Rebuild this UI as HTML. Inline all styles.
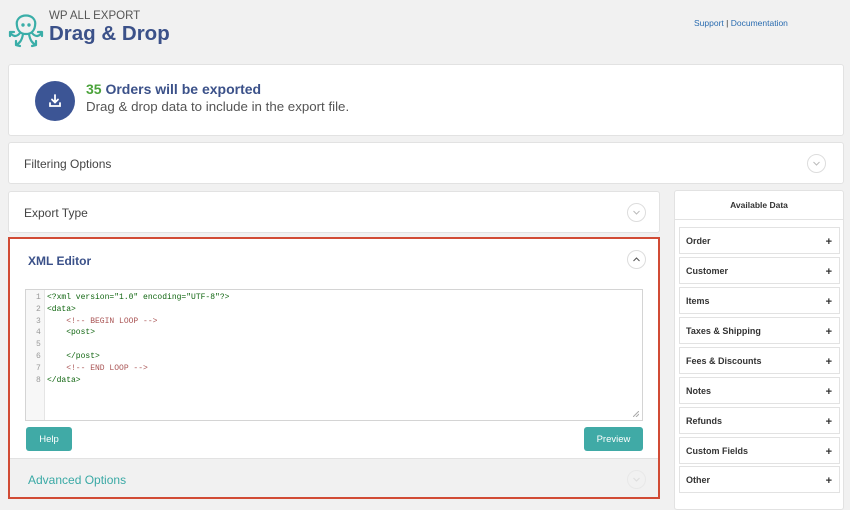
<!DOCTYPE html>
<html><head><style>
*{box-sizing:border-box;margin:0;padding:0}
body{width:850px;height:506px;background:#f1f1f1;font-family:"Liberation Sans",sans-serif;position:relative;overflow:hidden}
.a{position:absolute}
.box{position:absolute;background:#fff;border:1px solid #e2e2e2;border-radius:3px}
.circ{position:absolute;width:19px;height:19px;border:1px solid #ddd;border-radius:50%;background:#fff}
.circ svg{position:absolute;left:4px;top:4px}
.item{position:absolute;left:679px;width:161px;height:27px;background:#fff;border:1px solid #e2e2e2;font-size:9px;font-weight:bold;color:#333;padding:8px 0 0 6px}
.item span{position:absolute;right:7px;top:8px;font-size:11px}
.code{font-family:"Liberation Mono",monospace;font-size:8px;line-height:11.8px;color:#333;white-space:pre}
.btn{position:absolute;background:#40aaa6;color:#fff;font-size:9.5px;border-radius:3px;text-align:center;line-height:24px;height:24px;padding-top:1px}
</style></head><body>
<svg class="a" style="left:8px;top:8px" width="36" height="40" viewBox="0 0 36 40" fill="none" stroke="#3aaea8" stroke-width="2.2" stroke-linecap="round">
<path d="M9 18 C6 4 30 4 27 18 C26 24 22 26 18 26 C14 26 10 24 9 18Z"/>
<path d="M12 25 C8 30 4 28 2 24 M2 24 l0 4 M2 24 l4 0"/>
<path d="M24 25 C28 30 32 28 34 24 M34 24 l0 4 M34 24 l-4 0"/>
<path d="M15 26 C14 32 12 35 8 37 M8 37 l4 1 M8 37 l0-4"/>
<path d="M21 26 C22 32 24 35 28 37 M28 37 l-4 1 M28 37 l0-4"/>
<circle cx="15" cy="17" r="0.6" fill="#3aaea8"/><circle cx="21" cy="17" r="0.6" fill="#3aaea8"/>
</svg>
<div class="a" style="left:49px;top:10px;font-size:11.5px;color:#555">WP ALL EXPORT</div>
<div class="a" style="left:49px;top:22px;font-size:20.5px;font-weight:bold;color:#3b5189">Drag &amp; Drop</div>
<div class="a" style="left:694px;top:18px;font-size:8.5px;color:#2a6cb0">Support <span style="color:#333">|</span> Documentation</div>

<div class="box" style="left:8px;top:64px;width:836px;height:72px"></div>
<div class="a" style="left:35px;top:81px;width:40px;height:40px;border-radius:50%;background:#3c5595"></div>
<svg class="a" style="left:47px;top:93px" width="16" height="16" viewBox="0 0 16 16" fill="none" stroke="#fff" stroke-width="1.8" stroke-linecap="round"><path d="M8 2v7M5 6.5l3 3 3-3M3 10v3h10v-3"/></svg>
<div class="a" style="left:86px;top:81px;font-size:14px;font-weight:bold;color:#3b5189"><span style="color:#4ba33b">35</span> Orders will be exported</div>
<div class="a" style="left:86px;top:99px;font-size:13.3px;color:#555">Drag &amp; drop data to include in the export file.</div>

<div class="box" style="left:8px;top:142px;width:836px;height:42px"></div>
<div class="a" style="left:24px;top:157px;font-size:12px;color:#444">Filtering Options</div>
<div class="circ" style="left:807px;top:154px"><svg width="9" height="9" viewBox="0 0 9 9"><path d="M1.5 3l3 3 3-3" stroke="#bbb" fill="none"/></svg></div>

<div class="box" style="left:8px;top:191px;width:652px;height:42px"></div>
<div class="a" style="left:24px;top:206px;font-size:12px;color:#444">Export Type</div>
<div class="circ" style="left:627px;top:203px"><svg width="9" height="9" viewBox="0 0 9 9"><path d="M1.5 3l3 3 3-3" stroke="#bbb" fill="none"/></svg></div>

<div class="a" style="left:8px;top:237px;width:652px;height:262px;background:#fff;border:2px solid #d14b35"></div>
<div class="a" style="left:28px;top:254px;font-size:12px;font-weight:bold;color:#3b5189">XML Editor</div>
<div class="circ" style="left:627px;top:250px"><svg width="9" height="9" viewBox="0 0 9 9"><path d="M1.5 6l3-3 3 3" stroke="#555" fill="none"/></svg></div>
<div class="a" style="left:25px;top:289px;width:618px;height:132px;border:1px solid #d4d4d4;background:#fff"></div>
<div class="a" style="left:26px;top:290px;width:19px;height:130px;background:#f7f7f7;border-right:1px solid #e5e5e5"></div>
<div class="a code" style="left:36px;top:292px;color:#999">1
2
3
4
5
6
7
8</div>
<div class="a code" style="left:47px;top:292px;color:#116611">&lt;?xml version="1.0" encoding="UTF-8"?&gt;
&lt;data&gt;
    <span style="color:#a55">&lt;!-- BEGIN LOOP --&gt;</span>
    &lt;post&gt;

    &lt;/post&gt;
    <span style="color:#a55">&lt;!-- END LOOP --&gt;</span>
&lt;/data&gt;</div>
<svg class="a" style="left:633px;top:411px" width="6" height="6"><path d="M0 6L6 0M3 6L6 3" stroke="#aaa"/></svg>
<div class="btn" style="left:26px;top:427px;width:46px">Help</div>
<div class="btn" style="left:584px;top:427px;width:59px">Preview</div>
<div class="a" style="left:10px;top:458px;width:648px;height:39px;background:#f1f1f1;border-top:1px solid #e2e2e2"></div>
<div class="a" style="left:28px;top:473px;font-size:12px;color:#3aa9a5">Advanced Options</div>
<div class="circ" style="left:627px;top:470px;background:transparent;border-color:#e8e8e8"><svg width="9" height="9" viewBox="0 0 9 9"><path d="M1.5 3l3 3 3-3" stroke="#ddd" fill="none"/></svg></div>

<div class="box" style="left:674px;top:190px;width:170px;height:320px"></div>
<div class="a" style="left:674px;top:219px;width:170px;border-top:1px solid #e2e2e2"></div>
<div class="a" style="left:674px;top:200px;width:170px;text-align:center;font-size:8.5px;font-weight:bold;color:#333">Available Data</div>
<div class="item" style="top:227px">Order<span>+</span></div>
<div class="item" style="top:257px">Customer<span>+</span></div>
<div class="item" style="top:287px">Items<span>+</span></div>
<div class="item" style="top:317px">Taxes &amp; Shipping<span>+</span></div>
<div class="item" style="top:347px">Fees &amp; Discounts<span>+</span></div>
<div class="item" style="top:377px">Notes<span>+</span></div>
<div class="item" style="top:407px">Refunds<span>+</span></div>
<div class="item" style="top:437px">Custom Fields<span>+</span></div>
<div class="item" style="top:466px">Other<span>+</span></div>
</body></html>
